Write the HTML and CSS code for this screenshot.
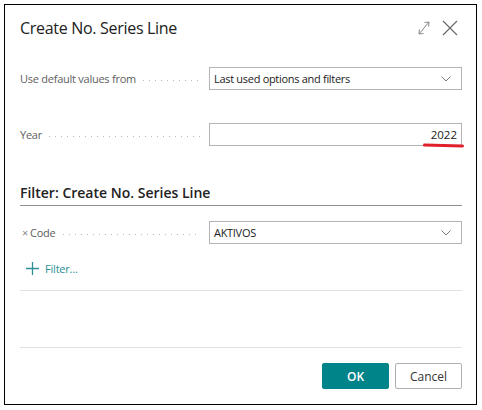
FILE: index.html
```html
<!DOCTYPE html>
<html>
<head>
<meta charset="utf-8">
<link rel="stylesheet" href="styles.css">
</head>
<body>
<div class="dialog">
  <div class="header">
    <div class="title">Create No. Series Line</div>
    <div class="header-icons">
      <svg class="ico-expand" width="12" height="14" viewBox="0 0 12 14">
        <path d="M1 13 L11 1 M11 1 L6.5 1.6 M11 1 L10.6 5.6 M1 13 L1.4 8.4 M1 13 L5.5 12.4" fill="none" stroke="#8a8a8a" stroke-width="1"/>
      </svg>
      <svg class="ico-close" width="16" height="16" viewBox="0 0 16 16">
        <path d="M1 1 L15 15 M15 1 L1 15" fill="none" stroke="#6a6a6a" stroke-width="1.2"/>
      </svg>
    </div>
  </div>

  <div class="row row-first">
    <div class="label"><span class="label-text">Use default values from</span><span class="leader"></span></div>
    <div class="field select">
      <span class="value">Last used options and filters</span>
      <svg class="chev" width="10" height="6" viewBox="0 0 10 6"><path d="M0.5 0.5 L5 5 L9.5 0.5" fill="none" stroke="#7a7a7a" stroke-width="1"/></svg>
    </div>
  </div>

  <div class="row row-year">
    <div class="label"><span class="label-text">Year</span><span class="leader"></span></div>
    <div class="field number">
      <span class="value">2022</span>
      <span class="redmark"></span>
    </div>
  </div>

  <div class="section-heading">Filter: Create No. Series Line</div>

  <div class="row row-code">
    <div class="label"><span class="remove">×</span><span class="label-text">Code</span><span class="leader"></span></div>
    <div class="field select">
      <span class="value">AKTIVOS</span>
      <svg class="chev" width="10" height="6" viewBox="0 0 10 6"><path d="M0.5 0.5 L5 5 L9.5 0.5" fill="none" stroke="#7a7a7a" stroke-width="1"/></svg>
    </div>
  </div>

  <div class="add-filter">
    <svg width="13" height="13" viewBox="0 0 13 13"><path d="M6.5 0 V13 M0 6.5 H13" stroke="#2e8f95" stroke-width="1.3"/></svg>
    <span>Filter...</span>
  </div>

  <div class="divider d1"></div>
  <div class="spacer"></div>
  <div class="divider d2"></div>

  <div class="actions">
    <button class="btn btn-ok">OK</button>
    <button class="btn btn-cancel">Cancel</button>
  </div>
</div>
</body>
</html>
```

FILE: styles.css
```css
html, body {
  margin: 0;
  padding: 0;
  background: #fff;
}
body {
  font-family: "Open Sans", "Noto Sans", sans-serif;
  color: #212121;
}
.dialog {
  margin: 4px;
  width: 473px;
  height: 401px;
  box-sizing: border-box;
  border: 1px solid #000;
  padding: 0 14px 0 15px;
  display: flex;
  flex-direction: column;
}
.header {
  display: flex;
  justify-content: space-between;
  align-items: center;
  padding-top: 11px;
  height: 24px;
}
.title {
  font-size: 16px;
  line-height: 24px;
  letter-spacing: -0.3px;
  color: #212121;
}
.header-icons {
  display: flex;
  align-items: center;
  gap: 12px;
  padding-right: 4px;
}
.row {
  display: flex;
  align-items: center;
  height: 23px;
}
.row-first { margin-top: 27px; }
.row-year { margin-top: 33px; }
.row-code { margin-top: 15px; }
.label {
  width: 189px;
  flex: none;
  display: flex;
  align-items: center;
  font-size: 11px;
  letter-spacing: -0.25px;
  color: #5e5e5e;
}
.label-text { white-space: nowrap; }
.remove {
  color: #8a8a8a;
  font-size: 11px;
  margin: 0 2px 0 2px;
}
.leader {
  flex: 1;
  height: 1px;
  margin: 4px 9px 0 7px;
  background-image: linear-gradient(to right, #b8b8b8 1px, transparent 1px);
  background-size: 6px 1px;
  background-repeat: repeat-x;
}
.field {
  position: relative;
  flex: 1;
  height: 23px;
  box-sizing: border-box;
  border: 1px solid #b4b4b4;
  display: flex;
  align-items: center;
  padding: 0 5px 0 4px;
  font-size: 11px;
  letter-spacing: -0.3px;
  color: #212121;
}
.select { justify-content: space-between; padding-right: 10px; }
.number { justify-content: flex-end; padding-right: 4px; font-size: 11.5px; letter-spacing: 0; }
.redmark {
  position: absolute;
  right: -3px;
  bottom: -2px;
  width: 41px;
  height: 3px;
  background: #e0202a;
  border-radius: 2px;
  transform: rotate(1.5deg);
}
.section-heading {
  margin-top: 37px;
  font-size: 14px;
  line-height: 20px;
  font-weight: 600;
  color: #212121;
  padding-bottom: 2px;
  border-bottom: 1px solid #8f8f8f;
}
.add-filter {
  margin-top: 14px;
  height: 20px;
  display: flex;
  align-items: center;
  gap: 6px;
  padding-left: 6px;
  font-size: 11px;
  letter-spacing: -0.2px;
  color: #2e8f95;
}
.divider {
  height: 1px;
  background: #e1e1e1;
}
.d1 { margin-top: 12px; }
.spacer { height: 56px; }
.actions {
  margin-top: 15px;
  display: flex;
  justify-content: flex-end;
  gap: 6px;
}
.btn {
  width: 67px;
  height: 26px;
  font-family: "Open Sans", "Noto Sans", sans-serif;
  font-size: 12px;
  border-radius: 2px;
  cursor: pointer;
}
.btn-ok {
  background: #008489;
  border: 1px solid #008489;
  color: #fff;
  font-weight: 600;
}
.btn-cancel {
  background: #fff;
  border: 1px solid #b0b0b0;
  color: #333;
}
```
